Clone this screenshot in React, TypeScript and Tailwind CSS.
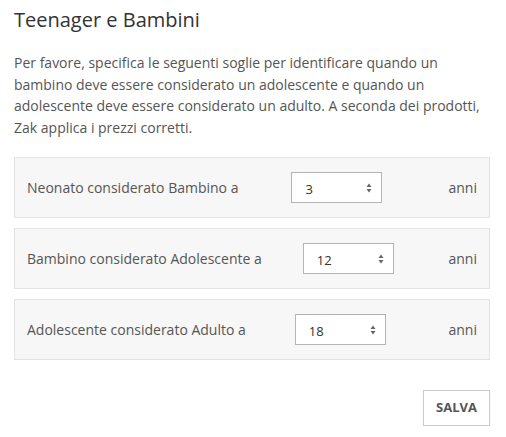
import React from 'react';

type Row = { label: string; value: string; gap: string };

const rows: Row[] = [
  { label: 'Neonato considerato Bambino a', value: '3', gap: 'ml-[53px]' },
  { label: 'Bambino considerato Adolescente a', value: '12', gap: 'ml-[41px]' },
  { label: 'Adolescente considerato Adulto a', value: '18', gap: 'ml-[49px]' },
];

function Arrows() {
  return (
    <svg width="6" height="10" viewBox="0 0 6 10" className="text-[#666]">
      <path d="M3 0.5 L5.5 4 H0.5 Z" fill="currentColor" />
      <path d="M3 9.5 L5.5 6 H0.5 Z" fill="currentColor" />
    </svg>
  );
}

function ThresholdRow({ row }: { row: Row }) {
  return (
    <div className="flex h-[61px] items-center border border-[#e3e3e3] bg-[#f7f7f7] pl-[12px] pr-[12px]">
      <span className="text-[14px] text-[#555]">{row.label}</span>
      <div className={`${row.gap} flex h-[31px] w-[91px] items-center justify-between border border-[#b4b4b4] bg-white pl-[13px] pr-[9px]`}>
        <span className="mt-[4px] text-[13px] text-[#333]">{row.value}</span>
        <Arrows />
      </div>
      <span className="ml-auto text-[14px] text-[#555]">anni</span>
    </div>
  );
}

export default function App() {
  return (
    <div className="w-[506px] bg-white pl-[14px] pr-[16px] pt-[6px] font-['Open_Sans',sans-serif]">
      <h1 className="text-[20px] leading-[28px] text-[#333]">Teenager e Bambini</h1>
      <p className="mt-[18px] text-[14px] leading-[21.5px] text-[#555]">
        Per favore, specifica le seguenti soglie per identificare quando un bambino deve essere
        considerato un adolescente e quando un adolescente deve essere considerato un adulto. A
        seconda dei prodotti, Zak applica i prezzi corretti.
      </p>
      <div className="mt-[19px] flex flex-col gap-[10px]">
        {rows.map((r) => (
          <ThresholdRow key={r.label} row={r} />
        ))}
      </div>
      <div className="mt-[30px] flex justify-end">
        <button className="h-[36px] w-[67px] border border-[#ccc] bg-white text-[13px] font-bold text-[#555] shadow-[0_1px_1px_rgba(0,0,0,0.15)]">
          SALVA
        </button>
      </div>
    </div>
  );
}
